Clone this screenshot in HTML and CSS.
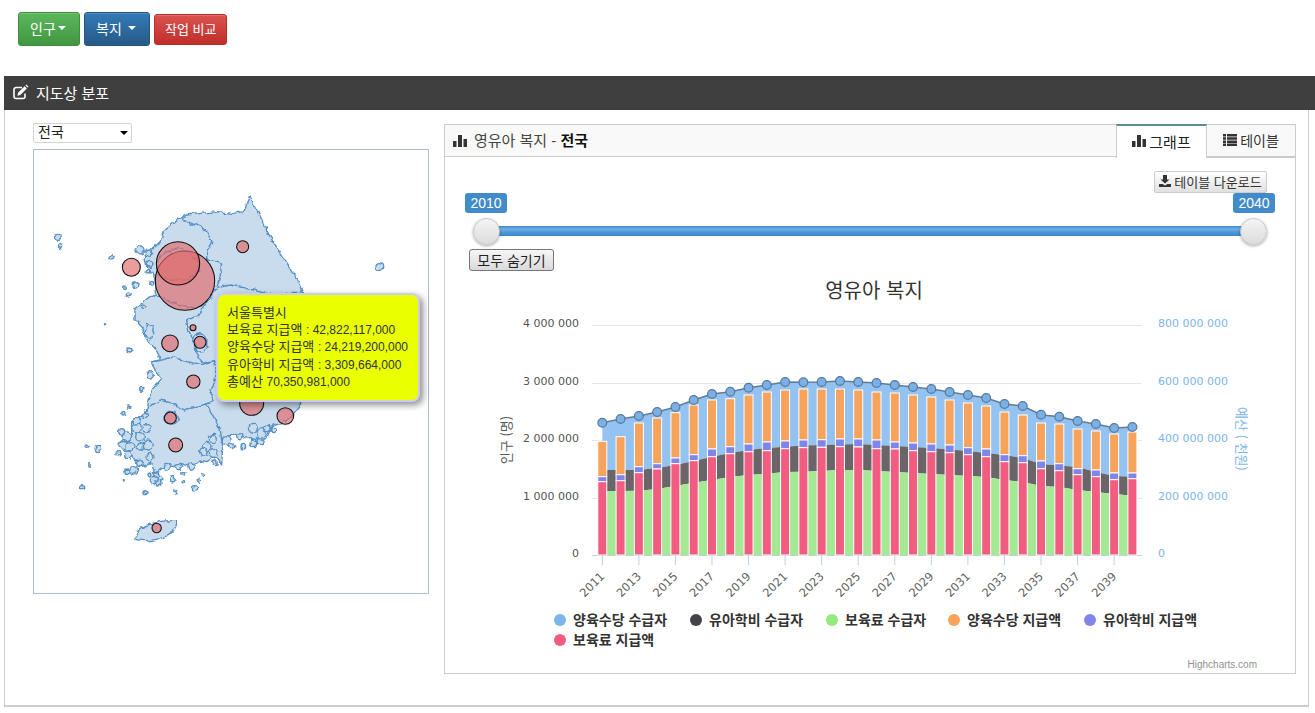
FILE: index.html
```html
<!DOCTYPE html>
<html lang="ko">
<head>
<meta charset="utf-8">
<title>영유아 복지</title>
<link rel="stylesheet" href="styles.css">
</head>
<body>
<nav class="toolbar">
  <button class="btn btn-green">인구<span class="caret caret-tight"></span></button>
  <button class="btn btn-blue">복지<span class="caret"></span></button>
  <button class="btn btn-red">작업 비교</button>
</nav>
<section class="section">
  <header class="section-head">
    <svg class="icon-edit" viewBox="0 0 16 16"><path d="M12.5 9.5v3a2 2 0 0 1-2 2h-7a2 2 0 0 1-2-2v-7a2 2 0 0 1 2-2h6" fill="none" stroke="#fff" stroke-width="1.6"/><path d="M5.5 8.8l6.600-6.600 2.300 2.300-6.600 6.600-2.900.6zM12.900 1.400l.9-.9 2.200 2.200-.9.9z" fill="#fff"/></svg>
    <span>지도상 분포</span>
  </header>
  <div class="section-body">
    <div class="map-col">
      <div class="select-wrap">
        <select class="region-select"><option>전국</option></select>
      </div>
      <div class="map-box">
        <svg class="map" id="map" viewBox="0 0 394 443">
          <defs>
            <filter id="rough" x="-5%" y="-5%" width="110%" height="110%" color-interpolation-filters="sRGB">
              <feTurbulence type="fractalNoise" baseFrequency="0.055" numOctaves="2" seed="4"/>
              <feDisplacementMap in="SourceGraphic" scale="16" xChannelSelector="R" yChannelSelector="G"/>
            </filter>
          </defs>
          <g transform="translate(6 30) scale(.33333)">
            <g class="land" id="land" filter="url(#rough)">
              <path d="M630 48L640 70 655 100 672 135 690 170 712 205 735 240 755 270 775 305 788 340 795 400 795 480 790 560 785 640 780 680 760 705 735 725 700 735 690 750 680 775 650 790 625 770 605 775 590 760 560 770 548 800 545 855 530 830 500 845 480 840 450 860 420 850 400 860 375 855 345 880 335 850 305 860 280 830 250 810 245 780 275 760 275 725 300 710 320 690 330 650 335 630 365 595 345 570 335 545 365 540 350 510 320 480 305 440 285 420 285 385 320 360 350 345 345 300 335 275 320 260 315 235 335 210 360 185 370 155 400 130 420 115 440 105 480 100 530 95 580 100 610 95z"/>
              <path d="M288 1078Q282 1055 315 1038 360 1020 410 1022 415 1050 380 1068 335 1090 288 1078z"/>
              <path class="line" d="M420 115L440 125 480 140 500 155 515 185 500 215 500 240 545 250 540 290 530 325 570 315 620 325 660 335 700 345 760 340 788 340"/>
              <path class="line" d="M350 345L380 360 420 375 470 385 500 365 530 325"/>
              <path class="line" d="M500 365L470 410 440 420 445 450 465 490 465 510 490 550 525 545 530 580 525 600 510 640 520 665 500 672"/>
              <path class="line" d="M335 545L370 540 400 530 440 545 470 550 490 555 525 545"/>
              <path class="line" d="M330 680L360 660 400 670 430 690 470 680 500 672 515 700 540 745 548 800"/>
              <path class="line" d="M352 240L380 215 420 205 470 235 480 270 440 300 385 300 355 280z"/>
              <path class="line" d="M375 715A18 18 0 1 0 415 715A18 18 0 1 0 375 715z"/>
              <path class="line" d="M462 487A20 22 0 1 0 500 487A20 22 0 1 0 462 487z"/>
              <path class="line" d="M320 430L340 440 335 480 315 470z"/>
            </g>
            <g id="bubbles" class="bubbles">
              <circle cx="435" cy="302" r="89"/>
              <circle cx="414" cy="250" r="65"/>
              <circle cx="274" cy="262" r="27"/>
              <circle cx="608" cy="200" r="18"/>
              <circle cx="390" cy="490" r="25"/>
              <circle cx="459" cy="443" r="9"/>
              <circle cx="480" cy="487" r="18"/>
              <circle cx="460" cy="605" r="20"/>
              <circle cx="391" cy="714" r="18"/>
              <circle cx="407" cy="795" r="21"/>
              <circle cx="635" cy="670" r="36"/>
              <circle cx="736" cy="708" r="25"/>
              <circle cx="350" cy="1044" r="14"/>
            </g>
          </g>
        </svg>
        <div class="tip">
          <div class="tip-line">서울특별시</div>
          <div class="tip-line">보육료 지급액 <span class="num">: 42,822,117,000</span></div>
          <div class="tip-line">양육수당 지급액 <span class="num">: 24,219,200,000</span></div>
          <div class="tip-line">유아학비 지급액 <span class="num">: 3,309,664,000</span></div>
          <div class="tip-line">총예산 <span class="num">70,350,981,000</span></div>
        </div>
      </div>
    </div>
    <article class="panel">
      <header class="panel-head">
        <svg class="icon-bars" viewBox="0 0 14 14"><path d="M0 7h3.500v6H0zM5 1h4v12H5zM10.500 5H14v8h-3.500z"/></svg>
        <span class="panel-title">영유아 복지 - <b>전국</b></span>
        <div class="tabs">
          <div class="tab tab-active"><svg class="icon-bars" viewBox="0 0 14 14"><path d="M0 7h3.500v6H0zM5 1h4v12H5zM10.500 5H14v8h-3.500z"/></svg>그래프</div>
          <div class="tab"><svg class="icon-list" viewBox="0 0 14 12"><path d="M0 0h3v2.500H0zM4 0h10v2.500H4zM0 3.200h3v2.500H0zM4 3.200h10v2.500H4zM0 6.400h3v2.500H0zM4 6.400h10v2.500H4zM0 9.500h3V12H0zM4 9.500h10V12H4z"/></svg>테이블</div>
        </div>
      </header>
      <div class="panel-body">
        <div class="download-row">
          <button class="btn-download"><svg class="icon-down" viewBox="0 0 12 12"><path d="M4 0h4v4.500h2.500L6 8.500 1.500 4.500H4zM0 9h3.500L6 10.500 8.500 9H12v3H0z"/></svg>테이블 다운로드</button>
        </div>
        <div class="slider">
          <span class="slider-label slider-label-from">2010</span>
          <span class="slider-label slider-label-to">2040</span>
          <div class="slider-track"></div>
          <span class="slider-handle slider-handle-from"></span>
          <span class="slider-handle slider-handle-to"></span>
        </div>
        <button class="btn-hide">모두 숨기기</button>
        <svg class="chart" id="chart" viewBox="445 271 850 401"></svg>
      </div>
    </article>
  </div>
</section>
<script src="app.js"></script>
</body>
</html>
```
FILE: styles.css
```css
* { box-sizing: border-box; }
html, body { margin: 0; padding: 0; background: #fff; overflow: hidden; }
body {
  font-family: "Liberation Sans", "Noto Sans CJK KR", sans-serif;
  color: #333;
  width: 1315px;
  height: 713px;
}
button { font-family: inherit; cursor: pointer; }

.toolbar { display: flex; align-items: flex-start; gap: 4px; height: 76px; padding: 12px 18px 0; }
.btn {
  height: 34px;
  padding: 0 11px 2px;
  border: 1px solid;
  border-radius: 3px;
  color: #fff;
  font-size: 14px;
  display: flex;
  align-items: center;
  white-space: nowrap;
  box-shadow: inset 0 1px 0 rgba(255,255,255,.15);
}
.btn-green { background: linear-gradient(#5cb85c, #419641); border-color: #3e8f3e; width: 62px; }
.btn-blue { background: linear-gradient(#337ab7, #265a88); border-color: #245580; width: 66px; }
.btn-red { background: linear-gradient(#d9534f, #c12e2a); border-color: #b92c28; height: 31px; margin-top: 2px; width: 73px; font-size: 13px; padding: 0 10px 2px; }
.caret { width: 0; height: 0; margin-left: 6px; border-style: solid; border-width: 4px 4px 0; border-color: #fff transparent transparent; }
.caret-tight { margin-left: 2px; }

.section { margin-left: 4px; }
.section-head {
  height: 34px;
  background: #3f3f3f;
  color: #fff;
  font-size: 15px;
  display: flex;
  align-items: center;
  gap: 7px;
  padding: 0 0 2px 8px;
}
.icon-edit { width: 17px; height: 16px; }
.section-body {
  width: 1305px;
  height: 597px;
  display: flex;
  align-items: flex-start;
  gap: 15px;
  padding: 13px 0 0 28px;
  border-left: 1px solid #ccc;
  border-right: 1px solid #ccc;
  border-bottom: 2px solid #ccc;
}

.map-col { width: 396px; flex: none; }
.select-wrap { position: relative; width: 99px; height: 20px; }
.select-wrap::after {
  content: "";
  position: absolute;
  right: 4px;
  top: 8px;
  border-style: solid;
  border-width: 4px 4px 0;
  border-color: #000 transparent transparent;
  pointer-events: none;
}
.region-select {
  appearance: none;
  width: 99px;
  height: 20px;
  padding: 0 0 2px 4px;
  font: 14px "Liberation Sans", "Noto Sans CJK KR", sans-serif;
  line-height: 16px;
  color: #222;
  background: #fff;
  border: 1px solid #d4d4d4;
  border-radius: 2px;
}
.map-box {
  position: relative;
  height: 445px;
  margin-top: 6px;
  border: 1px solid #a9bfd4;
}
.map { display: block; width: 394px; height: 443px; }
.land path { fill: #c9dcee; stroke: #5590c4; stroke-width: 4.2; stroke-linejoin: round; }
.land path.line { fill: none; }
.land circle { fill: #c9dcee; stroke: #5590c4; stroke-width: 4; }
.bubbles circle { fill: #e06a6a; fill-opacity: .66; stroke: #111; stroke-width: 3.2; }

.tip {
  position: absolute;
  left: 182px;
  top: 143px;
  width: 204px;
  height: 109px;
  padding: 9px 6px 9px 9px;
  background: #eaff00;
  border: 2px solid #ccccf0;
  border-radius: 8px;
  box-shadow: 3px 3px 7px rgba(0,0,0,.45);
  font-size: 13px;
  color: #333;
  white-space: nowrap;
}
.tip-line { height: 17.2px; line-height: 17.2px; }
.num { font-size: 12px; }

.panel {
  width: 852px;
  height: 550px;
  margin-top: 1px;
  border: 1px solid #ccc;
  flex: none;
}
.panel-head {
  height: 32px;
  background: #f9f9f9;
  border-bottom: 1px solid #ccc;
  display: flex;
  align-items: center;
  padding-left: 8px;
  position: relative;
}
.panel-title { font-size: 15px; margin: 0 0 2px 7px; color: #444; }
.panel-title b { color: #111; }
.icon-bars { width: 14px; height: 14px; fill: #333; flex: none; }
.icon-list { width: 14px; height: 12px; fill: #333; flex: none; }
.tabs { display: flex; align-self: stretch; margin-left: auto; }
.tab {
  width: 88px;
  margin-top: -1px;
  margin-bottom: -1px;
  height: 34px;
  display: flex;
  align-items: center;
  justify-content: center;
  gap: 3px;
  padding-bottom: 2px;
  font-size: 14px;
  color: #333;
  border-bottom: 1px solid #ccc;
}
.tab-active {
  width: 91px;
  font-size: 15px;
  background: #fff;
  border-left: 1px solid #ccc;
  border-right: 1px solid #ccc;
  border-top: 2px solid #5a8c94;
  border-bottom: 0;
  color: #222;
}

.panel-body { background: #fff; }
.download-row { display: flex; justify-content: flex-end; padding: 14px 28px 0 0; height: 36px; }
.btn-download {
  height: 22px;
  width: 113px;
  padding: 0 0 2px;
  border: 1px solid #ccc;
  border-radius: 2px;
  background: linear-gradient(#fff, #e0e0e0);
  font-size: 13px;
  color: #333;
  display: flex;
  align-items: center;
  justify-content: center;
  gap: 3px;
}
.icon-down { width: 12px; height: 12px; fill: #333; flex: none; }

.slider { position: relative; height: 56px; margin: 0 20px; }
.slider-label {
  position: absolute;
  top: 0;
  width: 42px;
  height: 20px;
  line-height: 20px;
  text-align: center;
  background: #428bca;
  color: #fff;
  font-size: 14px;
  border-radius: 3px;
}
.slider-label-from { left: 0; }
.slider-label-to { right: 0; }
.slider-track {
  position: absolute;
  left: 21px;
  right: 21px;
  top: 33px;
  height: 10px;
  background: linear-gradient(#3f86c6 0, #6db0ea 30%, #4a93d3 70%, #3f86c6 100%);
}
.slider-handle {
  position: absolute;
  top: 25px;
  width: 27px;
  height: 27px;
  border-radius: 50%;
  background: linear-gradient(#f4f4f4, #dcdcdc);
  border: 1px solid #c8c8c8;
  box-shadow: 0 1px 3px rgba(0,0,0,.35);
}
.slider-handle-from { left: 8px; }
.slider-handle-to { right: 8px; }

.btn-hide {
  display: block;
  height: 22px;
  width: 85px;
  margin-left: 24px;
  padding: 0 0 2px;
  font-size: 14px;
  color: #222;
  border: 1px solid #777;
  border-radius: 3px;
  background: linear-gradient(#f6f6f6, #dadada);
}
.chart { display: block; width: 850px; height: 401px; }
.chart text { font-family: "DejaVu Sans", sans-serif; }
.chart .y-left { font-size: 11px; fill: #555; text-anchor: end; }
.chart .y-right { font-size: 11px; fill: #7cb5ec; }
.chart .x-label { font-size: 11.5px; fill: #606060; text-anchor: end; }
.chart .chart-title { font-family: "Liberation Sans", "Noto Sans CJK KR", sans-serif; font-size: 20px; fill: #333; text-anchor: middle; }
.chart .axis-title { font-family: "Noto Sans CJK KR", sans-serif; font-size: 13px; text-anchor: middle; fill: #555; }
.chart .axis-title-right { fill: #7cb5ec; }
.chart .legend { font-family: "Noto Sans CJK KR", sans-serif; font-size: 14px; font-weight: 700; fill: #333; }
.chart .credit { font-family: "Liberation Sans", sans-serif; font-size: 10px; fill: #909090; text-anchor: end; }
.grid { stroke: #e6e6e6; stroke-width: 1; }
.axis { stroke: #c0d0e0; stroke-width: 1; }
.bar { stroke: #fff; stroke-width: 1; }
```
FILE: app.js
```js
var NS = "http://www.w3.org/2000/svg";
function el(parent, name, attrs, text) {
  var n = document.createElementNS(NS, name);
  for (var k in attrs) n.setAttribute(k, attrs[k]);
  if (text != null) n.textContent = text;
  parent.appendChild(n);
  return n;
}

/* islands of the map */
var land = document.getElementById("land");
var islands = [
  [55,172,9],[62,200,6],[215,232,5],[1018,261,10],[300,210,12],[325,220,10],[330,250,9],[325,275,7],
  [285,315,9],[265,345,6],[255,325,4],[335,310,6],[310,380,5],[270,510,6],[330,585,10],[305,628,6],
  [265,680,5],[195,430,2],[250,700,5],[140,800,5],[175,805,10],[150,855,4],[125,920,6],[235,820,5],
  [260,770,15],[250,795,13],[270,800,12],[265,825,11],[290,745,14],[300,770,13],[325,795,15],[300,800,10],
  [290,725,10],[320,745,11],[330,830,12],[280,870,13],[262,875,8],[345,900,11],[360,895,9],[355,910,8],
  [398,898,8],[430,880,5],[465,925,8],[405,935,4],[315,938,6],[490,885,4],[500,800,13],[520,775,12],
  [520,820,12],[490,815,11],[560,780,13],[575,800,9],[610,800,7],[640,745,12],[665,760,14],[680,745,10],
  [640,790,10],[660,785,9],[525,850,7],[430,905,4],[250,900,3],[475,900,4],[350,885,7],[330,885,6],
  [380,860,10],[415,860,9],[455,860,11],[300,850,10],[245,755,9],[315,705,8],[600,770,9],[700,750,8]
];
islands.forEach(function (p) { el(land, "circle", { cx: p[0], cy: p[1], r: p[2] }); });

/* chart */
var svg = document.getElementById("chart");
function cx(i) { return 602.3 + 18.28 * i; }
function poly(list) { return list.map(function (p) { return p[0] + "," + p[1]; }).join(" "); }

var top1 = [422.7,419,416,412,407,400,394,391.7,387.7,385,382,382.3,382,381,382,383,385,387,389,392,395,398,404,406,414.7,416.7,421,424,428,427];
var top2 = [470,470,470,468,465,461,456.7,453,450,448,446.7,445.5,445,444.5,444,445,446,447,448,449.5,451,453,455,458,464,465.5,467,472,476,476.7];
var top3 = [491,491,490.7,489,486,482.7,480,477,475,473.7,472,471.7,471,470,470,471,472,473,474,475,476,477,480,482,486,487,490,492,494,495.7];
var orange = [441.3,436.7,423,418,412.7,405,400,398.7,395,392,390,389,389,389,390,392,393,395,397,400,403,406,412,415,423,424,429,431,434,432];
var purple = [476.7,474.7,466.7,463.7,458,454.7,449,446.7,444,442,441,440,439.7,439,439,440,442,443,444,445,447.7,449,454.7,455.7,461,463.7,468.7,470,473,473];
var pink = [481.7,480.7,472.7,469,463.7,460.7,456.7,453.7,451.7,450.7,448.7,447.7,447.3,446.7,447,448.7,449,450.7,451.7,452.7,454.7,456.7,461.7,462.7,468.7,470.7,474.7,476.7,479.7,478.7];
var BASE = 555;

el(svg, "text", { x: 874, y: 298, "class": "chart-title" }, "영유아 복지");

[[325,"4 000 000","800 000 000"],[383,"3 000 000","600 000 000"],[440,"2 000 000","400 000 000"],[498,"1 000 000","200 000 000"],[555,"0","0"]].forEach(function (g) {
  el(svg, "line", { x1: 592, x2: 1142, y1: g[0] + .5, y2: g[0] + .5, "class": g[0] === 555 ? "axis" : "grid" });
  el(svg, "text", { x: 579, y: g[0] + 2, "class": "y-left" }, g[1]);
  el(svg, "text", { x: 1158, y: g[0] + 2, "class": "y-right" }, g[2]);
});

function band(upper, lower, fill) {
  var pts = upper.map(function (y, i) { return [cx(i), y]; });
  for (var i = upper.length - 1; i >= 0; i--) pts.push([cx(i), lower ? lower[i] : BASE]);
  el(svg, "polygon", { points: poly(pts), fill: fill });
}
band(top1, top2, "#94c2f1");
band(top2, top3, "#696569");
band(top3, null, "#a6e995");

for (var i = 0; i < 30; i++) {
  var x = cx(i) - 4.5;
  el(svg, "rect", { x: x, y: orange[i], width: 9, height: purple[i] - orange[i], fill: "#f7a35c", "class": "bar" });
  el(svg, "rect", { x: x, y: purple[i], width: 9, height: pink[i] - purple[i], fill: "#8085e9", "class": "bar" });
  el(svg, "rect", { x: x, y: pink[i], width: 9, height: BASE - pink[i], fill: "#f15c80", "class": "bar" });
  if (i % 2 === 0) {
    el(svg, "line", { x1: cx(i), x2: cx(i), y1: 555, y2: 565, "class": "axis" });
    var lx = cx(i) + 3, ly = 577;
    el(svg, "text", { x: lx, y: ly, transform: "rotate(-45 " + lx + " " + ly + ")", "class": "x-label" }, String(2011 + i));
  }
}

el(svg, "polyline", { points: poly(top1.map(function (y, i) { return [cx(i), y]; })), fill: "none", stroke: "#5f7d99", "stroke-width": 1.5 });
top1.forEach(function (y, i) {
  el(svg, "circle", { cx: cx(i), cy: y, r: 4.4, fill: "#7cb0e4", stroke: "#56799b", "stroke-width": 1.2 });
});

el(svg, "text", { x: 507, y: 440, transform: "rotate(-90 507 440) translate(0 4)", "class": "axis-title" }, "인구 (명)");
el(svg, "text", { x: 1241, y: 439, transform: "rotate(90 1241 439) translate(0 4)", "class": "axis-title axis-title-right" }, "예산 ( 천원)");

[[560,620,"#7cb5ec","양육수당 수급자"],[696,620,"#434348","유아학비 수급자"],[832,620,"#90ed7d","보육료 수급자"],[954,620,"#f7a35c","양육수당 지급액"],[1090,620,"#8085e9","유아학비 지급액"],[560,640,"#f15c80","보육료 지급액"]].forEach(function (l) {
  el(svg, "circle", { cx: l[0], cy: l[1], r: 6, fill: l[2] });
  el(svg, "text", { x: l[0] + 13, y: l[1] + 5, "class": "legend" }, l[3]);
});

el(svg, "text", { x: 1257, y: 668, "class": "credit" }, "Highcharts.com");
```
